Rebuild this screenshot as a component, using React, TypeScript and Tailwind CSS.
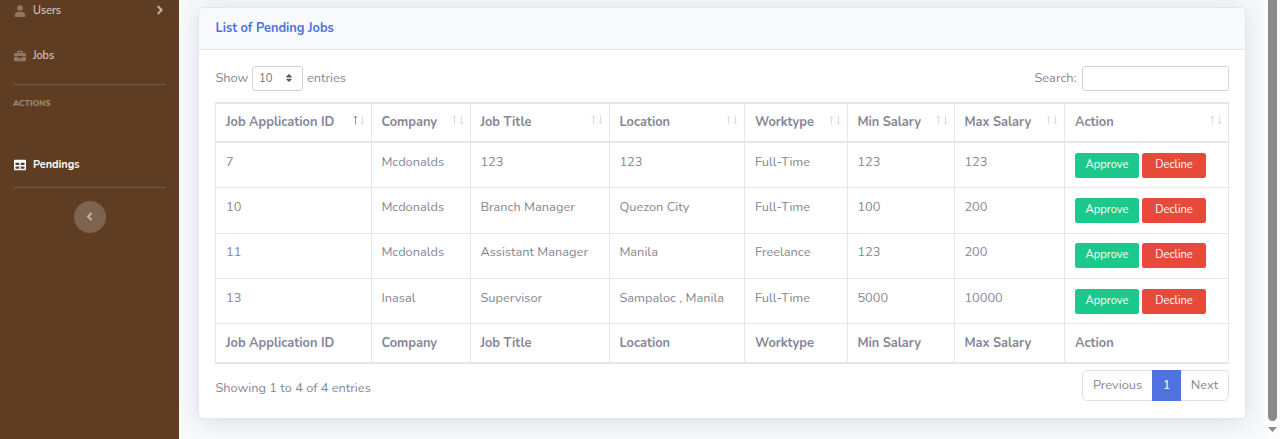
import React from "react";
import { FaUser, FaBriefcase, FaTable, FaAngleRight, FaAngleLeft, FaSort } from "react-icons/fa";

const columns = [
  { name: "Job Application ID", width: "w-[156px]", pad: "pl-[10px]" },
  { name: "Company", width: "w-[99px]", pad: "pl-[9.4px]" },
  { name: "Job Title", width: "w-[139px]", pad: "pl-[9.4px]" },
  { name: "Location", width: "w-[135px]", pad: "pl-[9.4px]" },
  { name: "Worktype", width: "w-[103px]", pad: "pl-[10px]" },
  { name: "Min Salary", width: "w-[107px]", pad: "pl-[9.4px]" },
  { name: "Max Salary", width: "w-[110px]", pad: "pl-[9.4px]" },
  { name: "Action", width: "w-[164px]", pad: "pl-[10px]" },
];

const jobs = [
  { height: "h-[45px]", pad: "pt-[10px]", cells: ["7", "Mcdonalds", "123", "123", "Full-Time", "123", "123"] },
  { height: "h-[46px]", pad: "pt-[10px]", cells: ["10", "Mcdonalds", "Branch Manager", "Quezon City", "Full-Time", "100", "200"] },
  { height: "h-[45px]", pad: "pt-[9px]", cells: ["11", "Mcdonalds", "Assistant Manager", "Manila", "Freelance", "123", "200"] },
  { height: "h-[45px]", pad: "pt-[10px]", cells: ["13", "Inasal", "Supervisor", "Sampaloc , Manila", "Full-Time", "5000", "10000"] },
];

function SortArrows({ active }: { active: boolean }) {
  return (
    <svg width="12" height="10" viewBox="0 0 12 10" fill="none" className="-mt-[6px] shrink-0">
      <path d="M2.5 9.5V1M0.5 3L2.5 1L4.5 3" stroke={active ? "#8f919e" : "#dcdce1"} />
      <path d="M9.5 0.5V9M7.5 7L9.5 9L11.5 7" stroke="#dcdce1" />
    </svg>
  );
}

function Sidebar() {
  return (
    <aside className="flex h-full w-[179px] shrink-0 flex-col bg-[#5e3d22] px-[13px] text-[10.88px] text-white/80">
      <div className="flex h-[21px] items-center">
        <FaUser className="mr-[7px] ml-px size-[12px] text-white/30" />
        <span>Users</span>
        <FaAngleRight className="-mt-px -mr-px ml-auto size-[14px] text-white/60" />
      </div>
      <div className="mt-[24px] flex h-[21px] items-center">
        <FaBriefcase className="mr-[7px] ml-px size-[12px] text-white/30" />
        <span>Jobs</span>
      </div>
      <div className="mt-[18px] border-t border-white/15" />
      <div className="mt-[13px] h-[12px] text-[8.32px] leading-[12px] font-extrabold text-white/40">ACTIONS</div>
      <div className="mt-[44px] flex h-[21px] items-center font-bold text-white">
        <FaTable className="mr-[7px] ml-px size-[12px]" />
        <span>Pendings</span>
      </div>
      <div className="mt-[12px] border-t border-white/15" />
      <button className="mt-[13px] flex size-[32px] items-center justify-center self-center rounded-full bg-white/20">
        <FaAngleLeft className="-mt-px size-[13px] text-white/50" />
      </button>
    </aside>
  );
}

function JobsTable() {
  return (
    <table className="w-[1014px] table-fixed border-separate border-spacing-0 border-t-2 border-b border-l border-[#e3e6f0]">
      <thead>
        <tr className="h-[39px]">
          {columns.map((c, i) => (
            <th key={c.name} className={`${c.width} ${c.pad} border-r border-b-2 border-[#e3e6f0] py-0 pr-[6px] text-left font-bold`}>
              <div className="flex items-center justify-between whitespace-nowrap">
                {c.name}
                <SortArrows active={i === 0} />
              </div>
            </th>
          ))}
        </tr>
      </thead>
      <tbody>
        {jobs.map((job) => (
          <tr key={job.cells[0]} className={job.height}>
            {job.cells.map((cell, i) => (
              <td key={i} className={`${columns[i].pad} ${job.pad} border-r border-b border-[#e3e6f0] pb-0 align-top whitespace-nowrap`}>
                {cell}
              </td>
            ))}
            <td className={`${job.pad} border-r border-b border-[#e3e6f0] px-[10px] pb-0 align-top`}>
              <div className="flex gap-[3px] text-[11.2px] text-white">
                <button className="h-[25px] w-[64px] rounded-[2.5px] bg-[#1cc88a] pb-[2px]">Approve</button>
                <button className="h-[25px] w-[64px] rounded-[2.5px] bg-[#e74a3b] pb-[2px]">Decline</button>
              </div>
            </td>
          </tr>
        ))}
      </tbody>
      <tfoot>
        <tr className="h-[39px]">
          {columns.map((c) => (
            <th key={c.name} className={`${c.pad} border-r border-b border-[#e3e6f0] py-0 text-left font-bold whitespace-nowrap`}>
              {c.name}
            </th>
          ))}
        </tr>
      </tfoot>
    </table>
  );
}

export default function App() {
  return (
    <div className="flex h-[439px] w-[1280px] overflow-hidden bg-[#f8f9fc] font-['Nunito','Lato',sans-serif] text-[12.8px] leading-[19px] text-[#858796]">
      <Sidebar />
      <main className="flex h-full flex-1 flex-col overflow-hidden pt-[7px] pl-[19px]">
        <section className="h-[412px] w-[1048px] rounded-[5px] border border-[#e3e6f0] bg-white shadow-[0_2px_22px_rgba(58,59,69,0.15)]">
          <header className="flex h-[42px] items-center rounded-t-[4px] border-b border-[#e3e6f0] bg-[#f8f9fc] px-[16.5px] font-bold text-[#4e73df]">
            List of Pending Jobs
          </header>
          <div className="px-[16px] pt-[16px]">
            <div className="flex h-[25px] items-center justify-between">
              <label className="flex items-center pl-[0.4px]">
                Show
                <span className="mr-[4px] ml-[3.6px] flex h-[25px] w-[51px] items-center justify-between rounded-[3px] border border-[#d1d3e2] pr-[8px] pb-px pl-[6px] text-[11.2px] text-[#6e707e]">
                  10
                  <FaSort className="size-[10px] text-[#5a5c69]" />
                </span>
                entries
              </label>
              <label className="flex items-center">
                Search:
                <input className="ml-[5.5px] h-[25px] w-[147px] rounded-[3px] border border-[#d1d3e2]" />
              </label>
            </div>
            <div className="mt-[11px]">
              <JobsTable />
            </div>
            <div className="mt-[6px] flex items-start justify-between">
              <p className="mt-[9px] pl-[0.4px]">Showing 1 to 4 of 4 entries</p>
              <nav className="flex h-[31px] w-[147px] rounded-[5px] border border-[#dddfeb] text-center leading-[29px]">
                <span className="w-[69px]">Previous</span>
                <span className="-my-px w-[29px] bg-[#4e73df] leading-[31px] text-white">1</span>
                <span className="flex-1">Next</span>
              </nav>
            </div>
          </div>
        </section>
      </main>
      <div className="flex w-[15px] shrink-0 flex-col items-center bg-[#fcfcfc]">
        <div className="h-[421px] w-[9px] rounded-b-full bg-[#8b8b8b]" />
        <svg width="9" height="5" viewBox="0 0 9 5" className="mt-[6px]">
          <path d="M0 0H9L4.5 5Z" fill="#8b8b8b" />
        </svg>
      </div>
    </div>
  );
}
